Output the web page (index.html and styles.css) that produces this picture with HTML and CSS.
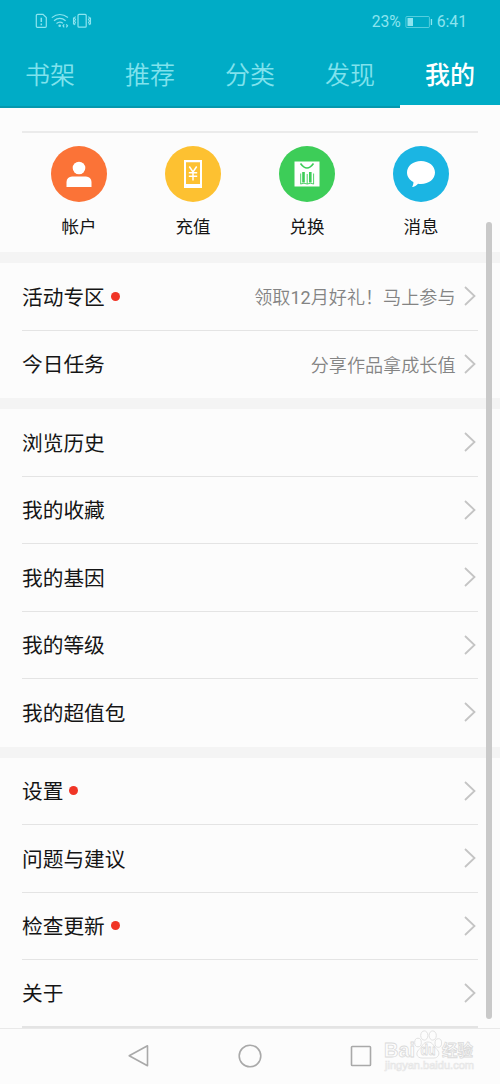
FILE: index.html
```html
<!DOCTYPE html>
<html lang="zh-CN">
<head>
<meta charset="utf-8">
<title>我的</title>
<link rel="stylesheet" href="styles.css">
</head>
<body>
<div class="screen">
  <header class="header">
    <div class="status">
      <svg class="status-icons" width="58" height="16" viewBox="0 0 58 16" fill="none" stroke="currentColor" stroke-width="1.2">
        <path d="M3.500 1.300h5.500l3.300 3.200v8.800a1 1 0 0 1-1 1H3.300a1 1 0 0 1-1-1v-10.800a1.200 1.200 0 0 1 1.200-1.200z"/>
        <path d="M7.300 4.800v4.200M7.300 10.500v1.800" stroke-width="1.500"/>
        <path d="M17.800 4.600q8-6.200 16.200 0M20 7.700q5.800-4.600 11.600 0M22.500 10.500q3.200-2.600 6.400-.3"/>
        <circle cx="25.700" cy="12.800" r="1.300" fill="currentColor" stroke="none"/>
        <path d="M30.200 11.300l-1.200 1.500 1.200 1.500M32.300 11.300l1.200 1.500-1.200 1.500"/>
        <rect x="44" y="1.400" width="8.200" height="12.800" rx="1"/>
        <path d="M41.500 3.500l-1 1.500 1 1.500-1 1.500 1 1.500-1 1.500.5 1M39.500 4.500v7M54.500 3.500l1 1.500-1 1.500 1 1.500-1 1.500 1 1.500-.5 1M56.500 4.500v7" stroke-width="1.100"/>
      </svg>
      <div class="status-right">
        <span>23%</span>
        <svg class="battery" width="28" height="14" viewBox="0 0 28 14">
          <rect x=".9" y="1.500" width="23.500" height="11" rx="1" fill="none" stroke="currentColor" stroke-opacity=".6"/>
          <path d="M2.500 3h5.500v8H2.500zM25.800 4h1.300v6h-1.300z" fill="currentColor"/>
        </svg>
        <span>6:41</span>
      </div>
    </div>
    <nav class="tabs">
      <a class="tab">书架</a><a class="tab">推荐</a><a class="tab">分类</a><a class="tab">发现</a><a class="tab active">我的</a>
    </nav>
  </header>

  <main class="content">
    <section class="shortcuts">
      <div class="shortcut">
        <svg class="disc" viewBox="0 0 56 56"><circle cx="28" cy="28" r="28" fill="#fb7337"/><circle cx="28" cy="22" r="6.300" fill="#fff"/><path d="M15.500 41v-5a5.500 5.500 0 0 1 5.500-5.500h14a5.500 5.500 0 0 1 5.500 5.500v5z" fill="#fff"/></svg>
        <span>帐户</span>
      </div>
      <div class="shortcut">
        <svg class="disc" viewBox="0 0 56 56"><circle cx="28" cy="28" r="28" fill="#fdc131"/><path d="M19 14h18v28H19zM21 16.300v21.700h14V16.300z" fill="#fff" fill-rule="evenodd"/><path d="M24.300 20.500l3.700 5.500 3.700-5.500M28 26v8.500M23.800 26.800h8.400M23.800 30.300h8.400" fill="none" stroke="#fff" stroke-width="1.500"/></svg>
        <span>充值</span>
      </div>
      <div class="shortcut">
        <svg class="disc" viewBox="0 0 56 56"><circle cx="28" cy="28" r="28" fill="#3dcd58"/><path d="M15.500 15.500h25v25h-25z" fill="#fff"/><g fill="none" stroke="#3dcd58"><path d="M21.500 17.500q6.500 9 13 0" stroke-width="1.600"/><path d="M21.700 27.500v10.500M34.600 27.500v10.500M28.200 28v10" stroke-width=".9"/><path d="M24.500 26v10.500M31.300 26v10.500" stroke-width="2.600"/><path d="M21.500 38q3.500-1.500 6.700 0 3.300-1.500 6.600 0" stroke-width=".9"/></g></svg>
        <span>兑换</span>
      </div>
      <div class="shortcut">
        <svg class="disc" viewBox="0 0 56 56"><circle cx="28" cy="28" r="28" fill="#1bb5e3"/><path d="M28 15c8 0 14 5 14 11.500S36 38 28 38c-1 0-2-.1-3-.3-1.500 1.800-3.500 3-6 3.300 1-1.300 1.500-3 1.400-5C16.500 34 14 30.500 14 26.500 14 20 20 15 28 15z" fill="#fff"/></svg>
        <span>消息</span>
      </div>
    </section>

    <section class="group">
      <div class="row"><span class="label dot">活动专区</span><span class="detail">领取<span class="digits">12</span>月好礼！马上参与</span><svg class="chevron" viewBox="0 0 12 20"><path d="M1 1l9.500 9L1 19"/></svg></div>
      <div class="row"><span class="label">今日任务</span><span class="detail">分享作品拿成长值</span><svg class="chevron" viewBox="0 0 12 20"><path d="M1 1l9.500 9L1 19"/></svg></div>
    </section>

    <section class="group">
      <div class="row"><span class="label">浏览历史</span><svg class="chevron" viewBox="0 0 12 20"><path d="M1 1l9.500 9L1 19"/></svg></div>
      <div class="row"><span class="label">我的收藏</span><svg class="chevron" viewBox="0 0 12 20"><path d="M1 1l9.500 9L1 19"/></svg></div>
      <div class="row"><span class="label">我的基因</span><svg class="chevron" viewBox="0 0 12 20"><path d="M1 1l9.500 9L1 19"/></svg></div>
      <div class="row"><span class="label">我的等级</span><svg class="chevron" viewBox="0 0 12 20"><path d="M1 1l9.500 9L1 19"/></svg></div>
      <div class="row"><span class="label">我的超值包</span><svg class="chevron" viewBox="0 0 12 20"><path d="M1 1l9.500 9L1 19"/></svg></div>
    </section>

    <section class="group last">
      <div class="row"><span class="label dot">设置</span><svg class="chevron" viewBox="0 0 12 20"><path d="M1 1l9.500 9L1 19"/></svg></div>
      <div class="row"><span class="label">问题与建议</span><svg class="chevron" viewBox="0 0 12 20"><path d="M1 1l9.500 9L1 19"/></svg></div>
      <div class="row"><span class="label dot">检查更新</span><svg class="chevron" viewBox="0 0 12 20"><path d="M1 1l9.500 9L1 19"/></svg></div>
      <div class="row"><span class="label">关于</span><svg class="chevron" viewBox="0 0 12 20"><path d="M1 1l9.500 9L1 19"/></svg></div>
    </section>
  </main>

  <footer class="navbar">
    <svg class="key" viewBox="0 0 24 24"><path d="M20.500 1.800v20L2.200 11.800z"/></svg>
    <svg class="key" viewBox="0 0 24 24"><circle cx="12" cy="12" r="10.800"/></svg>
    <svg class="key" viewBox="0 0 24 24"><rect x="2.500" y="2.500" width="19" height="19" rx=".8"/></svg>
  </footer>

  <div class="scrollbar"></div>
  <svg class="watermark" width="96" height="46" viewBox="0 0 96 46">
    <g class="outline">
      <text x="3" y="28" font-size="21" textLength="31" lengthAdjust="spacingAndGlyphs">Bai</text>
      <ellipse cx="37" cy="13.500" rx="3.300" ry="4.300"/><ellipse cx="43.300" cy="6.500" rx="3.600" ry="4.600"/><ellipse cx="51.700" cy="6.500" rx="3.600" ry="4.600"/><ellipse cx="57.300" cy="14" rx="3.300" ry="4.300"/>
      <path d="M47 13c5 0 6 5 9 7.500 4 4 1 8.500-3 8.500H41c-5 0-7-4.500-3-8.500 3-2.500 4-7.500 9-7.500z"/>
      <text x="39.500" y="26" font-size="14" textLength="15" lengthAdjust="spacingAndGlyphs">du</text>
      <text x="61" y="27" font-size="15.500">经验</text>
    </g>
    <text class="url" x="4" y="40" font-size="11" textLength="89" lengthAdjust="spacingAndGlyphs">jingyan.baidu.com</text>
  </svg>
</div>
</body>
</html>
```

FILE: styles.css
```css
* { box-sizing: border-box; }
body {
  margin: 0;
  background: #fcfcfc;
  font-family: Roboto, "Noto Sans CJK SC", sans-serif;
  color: #151515;
}
.screen {
  position: relative;
  width: 500px;
  height: 1084px;
  overflow: hidden;
  display: flex;
  flex-direction: column;
}
.header {
  height: 108px;
  flex: none;
  background: #00acc6;
  display: flex;
  flex-direction: column;
}
.status {
  height: 42px;
  padding: 0 33px 0 34px;
  display: flex;
  justify-content: space-between;
  align-items: center;
  color: #8ce4ef;
}
.status-right {
  display: flex;
  align-items: center;
  gap: 4px;
  padding-top: 1px;
  font-size: 15.7px;
}
.battery { display: block; }
.tabs {
  flex: 1;
  display: grid;
  grid-template-columns: repeat(5, 1fr);
}
.tab {
  height: 66px;
  padding-top: 2px;
  border-bottom: 2px solid #0498ae;
  color: #80e2ed;
  font-size: 25px;
  font-weight: 350;
  line-height: 64px;
  text-align: center;
}
.tab.active {
  color: #fff;
  font-weight: 500;
  border-bottom: 3px solid #fcfcfc;
}
.content { flex: none; }
.shortcuts {
  height: 155px;
  padding: 38px 22px 0;
  border-bottom: 11px solid #f4f4f4;
  display: grid;
  grid-template-columns: repeat(4, 1fr);
  background: linear-gradient(#ebebeb, #ebebeb) 22px 23px / 456px 2px no-repeat;
  background-origin: border-box;
}
.shortcut {
  display: flex;
  flex-direction: column;
  align-items: center;
  gap: 12px;
  font-size: 17.5px;
  line-height: 26px;
}
.disc { width: 56px; height: 56px; display: block; }
.group {
  padding: 0 22px;
  border-bottom: 11px solid #f4f4f4;
}
.group.last { border-bottom: 0; }
.row {
  height: 67.5px;
  border-bottom: 1px solid #e4e4e4;
  display: flex;
  align-items: center;
  padding-right: 2px;
}
.row:last-child { border-bottom-color: transparent; }
.last .row:last-child { border-bottom: 2px solid #e4e4e4; }
.label {
  padding-top: 3px;
  font-size: 20.7px;
  line-height: 30px;
}
.dot { display: flex; align-items: center; gap: 6px; }
.dot::after {
  content: "";
  width: 9px;
  height: 9px;
  margin-top: -3px;
  border-radius: 50%;
  background: #f03526;
}
.detail {
  margin-left: auto;
  margin-right: 8.5px;
  color: #848484;
  font-size: 18.1px;
  font-weight: 350;
}
.digits { font-weight: 400; }
.chevron {
  width: 12px;
  height: 20px;
  flex: none;
  fill: none;
  stroke: #c4c4c4;
  stroke-width: 1.8;
}
.label + .chevron { margin-left: auto; }
.navbar {
  flex: 1;
  padding-bottom: 1px;
  border-top: 1px solid #e9e9e9;
  display: flex;
  justify-content: center;
  align-items: center;
  gap: 87px;
}
.key {
  width: 24px;
  height: 24px;
  fill: none;
  stroke: #a9a9a9;
  stroke-width: 1.6;
  stroke-linejoin: round;
}
.scrollbar {
  position: absolute;
  left: 486px;
  top: 222px;
  width: 6px;
  height: 797px;
  border-radius: 3px;
  background: #c9c9c9;
}
.watermark {
  position: absolute;
  left: 381px;
  top: 1029px;
  font-family: "Liberation Sans", "Noto Sans CJK SC", sans-serif;
  font-weight: 700;
}
.outline {
  fill: #fdfdfd;
  stroke: #dadada;
  stroke-width: .8;
}
.url { fill: #fff; stroke: #e6e6e6; stroke-width: .7; font-weight: 400; }
```
